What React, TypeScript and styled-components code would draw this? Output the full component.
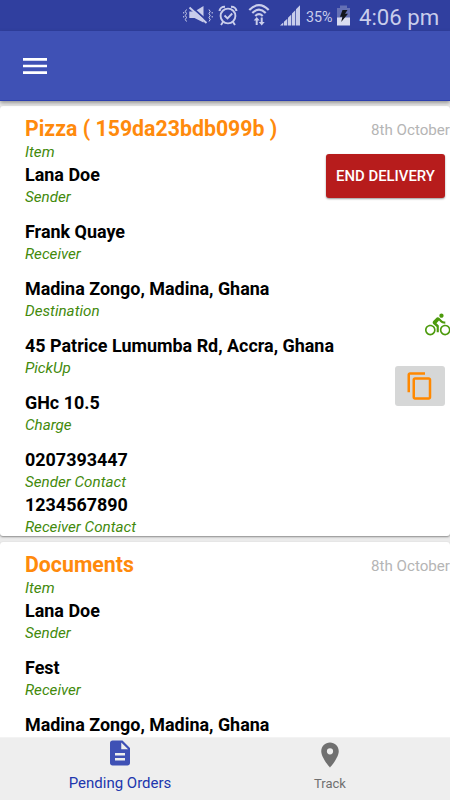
import React from "react";
import styled, { createGlobalStyle, css } from "styled-components";
import { MdContentCopy, MdDescription, MdDirectionsBike, MdMenu, MdPlace } from "react-icons/md";

const GlobalStyle = createGlobalStyle`
  * { box-sizing: border-box; }
  body { margin: 0; overflow: hidden; background: #ebebeb; }
  button { border: 0; padding: 0; font: inherit; }
`;

const Screen = styled.div`
  width: 450px;
  height: 800px;
  display: flex;
  flex-direction: column;
  overflow: hidden;
  background: #ebebeb;
  font-family: Roboto, "Liberation Sans", sans-serif;
`;

const StatusBar = styled.header`
  flex: none;
  height: 31px;
  padding: 3px 12px 0 0;
  display: flex;
  justify-content: flex-end;
  align-items: flex-start;
  background: #303f9f;
  color: #c9cdeb;
  svg { display: block; flex: none; }
`;

const Percent = styled.span`
  width: 28px;
  margin-left: 6px;
  font-size: 14.3px;
  line-height: 28px;
  white-space: nowrap;
`;

const Clock = styled.span`
  width: 79px;
  margin-left: 9px;
  font-size: 22.2px;
  line-height: 28px;
  white-space: nowrap;
`;

const AppBar = styled.nav`
  flex: none;
  height: 70px;
  padding: 1px 0 0 19px;
  display: flex;
  align-items: center;
  background: #3f51b5;
  border-bottom: 1px solid #2d40ae;
  box-shadow: 0 2px 4px rgba(0, 0, 0, 0.38);
  z-index: 1;
`;

const MenuButton = styled.button`
  display: flex;
  background: none;
  color: #fff;
`;

const Orders = styled.main`
  flex: 1;
  min-height: 0;
  overflow: hidden;
  padding-top: 5px;
  display: flex;
  flex-direction: column;
  gap: 6px;
`;

const Card = styled.article`
  flex: none;
  display: flex;
  height: 430px;
  padding: 8.8px 0 0 25px;
  background: #fff;
  border-radius: 3px;
  box-shadow: 0 1px 2px rgba(0, 0, 0, 0.42);
`;

const Details = styled.div`
  flex: 1;
  min-width: 0;
  white-space: nowrap;
`;

const Title = styled.h2`
  margin: 0;
  font-size: 21.3px;
  font-weight: 700;
  line-height: 27px;
  color: #ff8a0c;
`;

const Value = styled.div`
  font-size: 17.93px;
  font-weight: 700;
  line-height: 24px;
  color: #000;
`;

const Label = styled.div<{ $spaced?: boolean }>`
  font-size: 15.2px;
  font-style: italic;
  line-height: 20.7px;
  color: #438a0c;
  margin-bottom: ${(p) => (p.$spaced ? "12.4px" : "0")};
`;

const Side = styled.aside`
  flex: none;
  width: 125px;
  display: flex;
  flex-direction: column;
  align-items: flex-end;
`;

const DateText = styled.time`
  margin-top: 5.2px;
  font-size: 15.15px;
  line-height: 20px;
  color: #b5b5b5;
  white-space: nowrap;
`;

const EndButton = styled.button`
  width: 119px;
  height: 44px;
  margin: 14px 5px 0 0;
  border-radius: 3px;
  background: #b71c1c;
  color: #fff;
  font-size: 14.9px;
  font-weight: 500;
  box-shadow: 0 1px 2px rgba(0, 0, 0, 0.4);
`;

const BikeIcon = styled(MdDirectionsBike)`
  display: block;
  margin-top: 114px;
  font-size: 25.5px;
  color: #4c9a0c;
`;

const CopyButton = styled.button`
  width: 50px;
  height: 40px;
  margin: 28.5px 5px 0 0;
  display: flex;
  align-items: center;
  justify-content: center;
  border-radius: 3px;
  background: #d6d7d7;
  color: #ff8800;
`;

const TabBar = styled.footer`
  flex: none;
  height: 63px;
  padding: 0 15px;
  display: flex;
  background: #eee;
  border-top: 1px solid #f3f3f3;
  z-index: 1;
`;

const Tab = styled.button<{ $active?: boolean }>`
  width: 210px;
  display: flex;
  flex-direction: column;
  align-items: center;
  background: none;
  color: #707070;
  font-size: 13px;
  line-height: 20px;
  padding-top: 2px;
  svg { margin-bottom: 4px; }
  ${(p) =>
    p.$active &&
    css`
      color: #2036ad;
      font-size: 15px;
      padding-top: 0;
      svg { color: #3f51b5; margin-bottom: 5px; }
    `}
`;

const VibrateIcon = () => (
  <svg width="30" height="24" viewBox="0 0 30 24" fill="none" stroke="currentColor" strokeWidth="1">
    <path d="M3.5 6.5l-1.2 2 1.2 2-1.2 2 1.2 2-1.2 2 1.2 2M.7 9v1.5M.7 13v1.5M26 6.5l1.2 2-1.2 2 1.2 2-1.2 2 1.2 2-1.2 2M29.2 9v1.5M29.2 13v1.5" />
    <path d="M6.3 8.5h5.2l9-5.5v16.5l-9-4.5H6.3z" fill="currentColor" stroke="none" />
    <path d="M8 3.5l17 15" stroke="#303f9f" strokeWidth="1.8" />
    <path d="M6.5 4.5l17 15.5" strokeWidth="1.9" />
  </svg>
);

const AlarmIcon = () => (
  <svg width="20" height="24" viewBox="0 0 20 24" fill="none" stroke="currentColor">
    <circle cx="10" cy="13" r="7.4" strokeWidth="1.9" />
    <path d="M6.5 12.5l3 3 4.7-5M5 19l-2 3M15 19l2 3" strokeWidth="1.9" />
    <path d="M1.5 8A5 5 0 0 1 7 3.8M18.5 8A5 5 0 0 0 13 3.8" strokeWidth="2.2" />
  </svg>
);

const WifiIcon = () => (
  <svg width="22" height="24" viewBox="0 0 22 24" fill="none" stroke="currentColor">
    <path d="M1.3 7Q11-2.8 20.7 7M4.3 10Q11 3.4 17.7 10M7.3 13Q11 9.4 14.7 13" strokeWidth="2.2" />
    <path d="M8.7 14l3 3.5H9.7V22H7.7v-4.5H5.7zM13.7 22.5l-3-3.5h2v-4.5h2V19h2z" fill="currentColor" stroke="none" />
  </svg>
);

const SignalIcon = () => (
  <svg width="20" height="24" viewBox="0 0 20 24" fill="currentColor">
    <path d="M0 22.5l3.3-3v3zM4 18.7l3.3-3v6.8H4zM8 14.7l3.3-3.3v11.1H8zM12 10.5l3.3-3.3v15.3H12zM16 6.3L20 2.3v20.2h-4z" />
  </svg>
);

const BatteryIcon = () => (
  <svg width="13" height="24" viewBox="0 0 13 24">
    <path d="M0 5h3V2.5h7V5h3v10H0z" fill="#6570b5" />
    <path d="M0 14.5h13V22.5H0z" fill="#dadcf0" />
    <path d="M5.5 7h5L8 10.8h3L4.2 19l1.2-5.2H3z" fill="#12151d" />
  </svg>
);

const IconSlot = styled.span<{ $gap?: number }>`
  flex: none;
  margin-left: ${(p) => p.$gap ?? 0}px;
`;

interface Field {
  value: string;
  label: string;
  spaced?: boolean;
}

interface Order {
  title: string;
  date: string;
  inProgress?: boolean;
  fields: Field[];
}

const orders: Order[] = [
  {
    title: "Pizza ( 159da23bdb099b )",
    date: "8th October",
    inProgress: true,
    fields: [
      { value: "Lana Doe", label: "Sender", spaced: true },
      { value: "Frank Quaye", label: "Receiver", spaced: true },
      { value: "Madina Zongo, Madina, Ghana", label: "Destination", spaced: true },
      { value: "45 Patrice Lumumba Rd, Accra, Ghana", label: "PickUp", spaced: true },
      { value: "GHc 10.5", label: "Charge", spaced: true },
      { value: "0207393447", label: "Sender Contact" },
      { value: "1234567890", label: "Receiver Contact" },
    ],
  },
  {
    title: "Documents",
    date: "8th October",
    fields: [
      { value: "Lana Doe", label: "Sender", spaced: true },
      { value: "Fest", label: "Receiver", spaced: true },
      { value: "Madina Zongo, Madina, Ghana", label: "" },
    ],
  },
];

const OrderCard = ({ order }: { order: Order }) => (
  <Card>
    <Details>
      <Title>{order.title}</Title>
      <Label>Item</Label>
      {order.fields.map((f) => (
        <React.Fragment key={f.value}>
          <Value>{f.value}</Value>
          {f.label && <Label $spaced={f.spaced}>{f.label}</Label>}
        </React.Fragment>
      ))}
    </Details>
    <Side>
      <DateText>{order.date}</DateText>
      {order.inProgress && (
        <>
          <EndButton>END DELIVERY</EndButton>
          <BikeIcon />
          <CopyButton aria-label="Copy">
            <MdContentCopy size={30} />
          </CopyButton>
        </>
      )}
    </Side>
  </Card>
);

export default function App() {
  return (
    <Screen>
      <GlobalStyle />
      <StatusBar>
        <IconSlot><VibrateIcon /></IconSlot>
        <IconSlot $gap={5}><AlarmIcon /></IconSlot>
        <IconSlot $gap={10}><WifiIcon /></IconSlot>
        <IconSlot $gap={10}><SignalIcon /></IconSlot>
        <Percent>35%</Percent>
        <IconSlot $gap={3}><BatteryIcon /></IconSlot>
        <Clock>4:06 pm</Clock>
      </StatusBar>
      <AppBar>
        <MenuButton aria-label="Menu"><MdMenu size={32} /></MenuButton>
      </AppBar>
      <Orders>
        {orders.map((o) => <OrderCard key={o.title} order={o} />)}
      </Orders>
      <TabBar>
        <Tab $active><MdDescription size={30} />Pending Orders</Tab>
        <Tab><MdPlace size={30} />Track</Tab>
      </TabBar>
    </Screen>
  );
}
